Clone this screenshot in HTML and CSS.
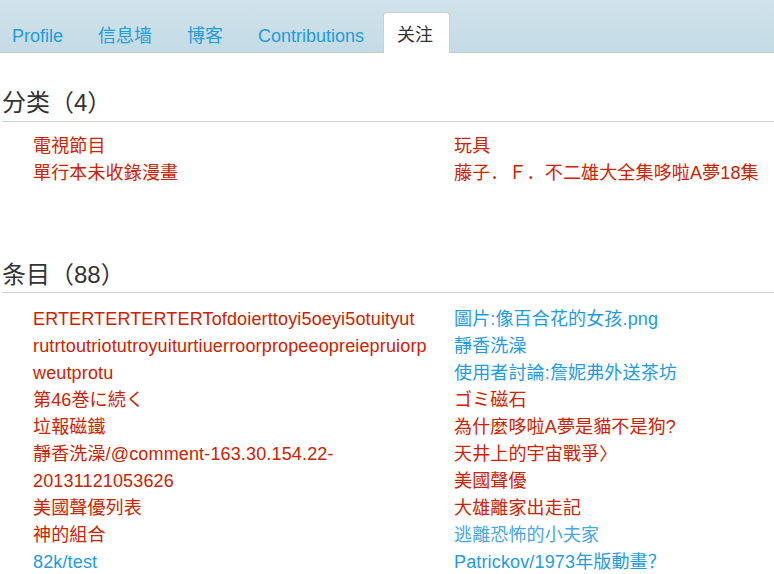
FILE: index.html
```html
<!DOCTYPE html>
<html lang="zh">
<head>
<meta charset="utf-8">
<title>关注</title>
<link rel="stylesheet" href="styles.css">
</head>
<body>
<nav class="tabs">
  <ul class="tab-list">
    <li class="tab"><a href="#">Profile</a></li>
    <li class="tab"><a href="#">信息墙</a></li>
    <li class="tab"><a href="#">博客</a></li>
    <li class="tab"><a href="#">Contributions</a></li>
    <li class="tab tab-active"><a href="#">关注</a></li>
  </ul>
</nav>
<main class="content">
  <section class="section section-cats">
    <h2 class="section-title">分类（4）</h2>
    <div class="cols cols-cats">
      <ul class="col">
        <li><a class="new" href="#">電視節目</a></li>
        <li><a class="new" href="#">單行本未收錄漫畫</a></li>
      </ul>
      <ul class="col">
        <li><a class="new" href="#">玩具</a></li>
        <li><a class="new" href="#">藤子．Ｆ．不二雄大全集哆啦A夢18集</a></li>
      </ul>
    </div>
  </section>
  <section class="section section-items">
    <h2 class="section-title">条目（88）</h2>
    <div class="cols cols-items">
      <ul class="col">
        <li><a class="new" href="#">ERTERTERTERTERTofdoierttoyi5oeyi5otuityut<wbr>rutrtoutriotutroyuiturtiuerroorpropeeopreiepruiorp<wbr>weutprotu</a></li>
        <li><a class="new" href="#">第46巻に続く</a></li>
        <li><a class="new" href="#">垃報磁鐵</a></li>
        <li><a class="new" href="#">靜香洗澡/@comment-163.30.154.22-20131121053626</a></li>
        <li><a class="new" href="#">美國聲優列表</a></li>
        <li><a class="new" href="#">神的組合</a></li>
        <li><a class="link" href="#">82k/test</a></li>
      </ul>
      <ul class="col">
        <li><a class="link" href="#">圖片:像百合花的女孩.png</a></li>
        <li><a class="link" href="#">靜香洗澡</a></li>
        <li><a class="link" href="#">使用者討論:詹妮弗外送茶坊</a></li>
        <li><a class="new" href="#">ゴミ磁石</a></li>
        <li><a class="new" href="#">為什麼哆啦A夢是貓不是狗?</a></li>
        <li><a class="new" href="#">天井上的宇宙戰爭〉</a></li>
        <li><a class="new" href="#">美國聲優</a></li>
        <li><a class="new" href="#">大雄離家出走記</a></li>
        <li><a class="link visited" href="#">逃離恐怖的小夫家</a></li>
        <li><a class="link" href="#">Patrickov/1973年版動畫？</a></li>
      </ul>
    </div>
  </section>
</main>
</body>
</html>
```

FILE: styles.css
```css
html, body {
  margin: 0;
  padding: 0;
  background: #fff;
}
body {
  font-family: "Liberation Sans", "Noto Sans CJK TC", "Noto Sans CJK SC", "Noto Sans CJK JP", sans-serif;
  font-size: 18px;
  color: #333;
  overflow: hidden;
}
a {
  text-decoration: none;
}

/* tabs */
.tabs {
  height: 52px;
  background: linear-gradient(#d0e3eb, #c4dbe5);
  border-bottom: 1px solid #c9c9c9;
  display: flex;
  align-items: flex-end;
}
.tab-list {
  list-style: none;
  margin: 0;
  padding: 0;
  display: flex;
  align-items: flex-end;
  gap: 3px;
  margin-bottom: -1px;
}
.tab a {
  display: block;
  height: 38px;
  line-height: 42px;
  padding: 0 15px;
  color: #1f9be0;
  border: 1px solid transparent;
  border-bottom: none;
  border-radius: 4px 4px 0 0;
}
.tab:first-child a {
  padding-left: 11px;
}
.tab-active a {
  background: #fff;
  color: #333;
  border-color: #cfcfcf;
  height: 40px;
  line-height: 44px;
  padding: 0 16px 0 13px;
}

/* content */
.content {
  padding: 0 0 0 2px;
}
.section-cats {
  margin-top: 34px;
}
.section-items {
  margin-top: 71px;
}
.section-title {
  margin: 0;
  font-size: 24px;
  font-weight: normal;
  line-height: 30px;
  color: #333;
  padding: 2px 0 2px;
  border-bottom: 1px solid #cfcfcf;
}
.section-cats .section-title {
  padding: 1px 0 3px;
}
.cols {
  display: grid;
  grid-template-columns: 394px 1fr;
  column-gap: 27px;
  padding-left: 31px;
}
.cols-cats {
  margin-top: 11px;
}
.cols-items {
  margin-top: 13px;
}
.col {
  list-style: none;
  margin: 0;
  padding: 0;
  min-width: 0;
}
.col li {
  line-height: 27px;
  letter-spacing: 0.15px;
  overflow-wrap: anywhere;
}
.new {
  color: #cc2200;
}
.link {
  color: #1f9be0;
}
.visited {
  color: #4aa6e0;
}
```
